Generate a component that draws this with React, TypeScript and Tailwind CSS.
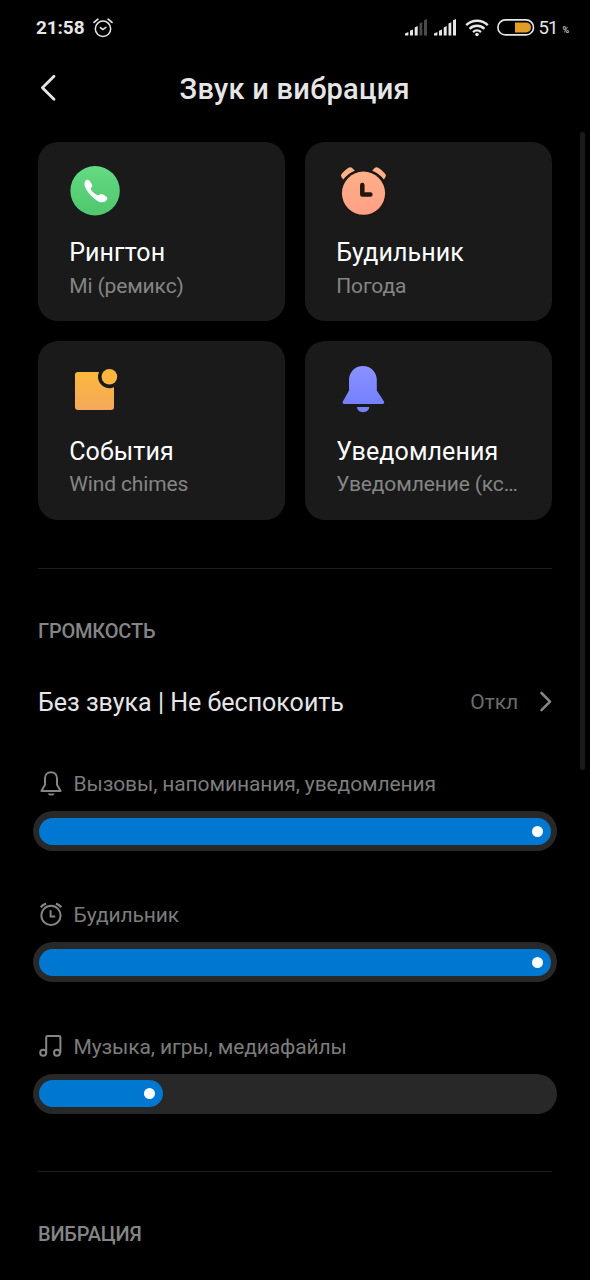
import type { ReactNode } from "react";

type SoundCard = {
  title: string;
  value: string;
  icon: ReactNode;
};

type VolumeItem = {
  label: string;
  icon: ReactNode;
  width: number;
};

function StatusAlarmIcon() {
  return (
    <svg width="20" height="20" viewBox="0 0 20 20" fill="none" stroke="#e6e6e6" strokeLinecap="round">
      <circle cx="10" cy="10.8" r="7.7" strokeWidth="1.5" />
      <path d="M7.4 9.6 9.8 11.6 12.9 9.4" strokeWidth="1.5" strokeLinejoin="round" />
      <path d="M1 4.4 4.9 1.2M19 4.4 15.1 1.2" strokeWidth="1.7" />
    </svg>
  );
}

const SIGNAL_BARS = [
  "M0 16.5V14.5L3.4 13V16.5Z",
  "M5 16.5V11.7L8 10.4V16.5Z",
  "M9.7 16.5V8.4L12.7 7V16.5Z",
  "M14.5 16.5V4.5L17.3 3.3V16.5Z",
  "M19 16.5V1.2L22 0V16.5Z"
];

function SignalIcon({ level }: { level: number }) {
  return (
    <svg width="22" height="17" viewBox="0 0 22 17">
      {SIGNAL_BARS.map((d, i) => (
        <path key={d} d={d} fill={i < level ? "#e6e6e6" : "#4a4a4a"} />
      ))}
    </svg>
  );
}

function WifiIcon() {
  return (
    <svg width="24" height="18" viewBox="0 0 24 18" fill="none" stroke="#e6e6e6" strokeWidth="2.4">
      <path d="M1.2 6.2C7.2 0.2 16.8 0.2 22.8 6.2" />
      <path d="M4.6 9.8C8.8 5.8 15.2 5.8 19.4 9.8" />
      <path d="M8 13.1C10.3 11 13.7 11 16 13.1" />
      <circle cx="12" cy="15.5" r="1.8" fill="#e6e6e6" stroke="none" />
    </svg>
  );
}

function BatteryIcon() {
  return (
    <svg width="38" height="17" viewBox="0 0 38 17">
      <rect x="0.9" y="0.9" width="35.6" height="15" rx="7.5" fill="none" stroke="#e6e6e6" strokeWidth="1.6" />
      <path d="M18 3.4H29A5 5 0 0 1 29 13.4H18Z" fill="#e39d26" />
    </svg>
  );
}

function PhoneIcon() {
  return (
    <svg className="overflow-visible" width="50" height="50" viewBox="0 0 50 50">
      <defs>
        <linearGradient id="phone" x1="0" y1="0" x2="0" y2="1">
          <stop offset="0" stopColor="#63db82" />
          <stop offset="1" stopColor="#50c66d" />
        </linearGradient>
      </defs>
      <circle cx="26.1" cy="24.8" r="24.7" fill="url(#phone)" />
      <path
        d="M16.2 15.2C17 13.8 18.9 13.2 20.2 14.4C21.7 15.8 23.3 18.3 23.3 19.8C23.3 21 21.8 21.6 21.8 22.8C21.9 24.9 27.2 29.4 29 29.3C30.2 29.2 30.8 27.8 32 27.9C33.8 28 36.3 29.4 37.8 31C39 32.4 38 34.2 36.6 35.2C34.6 36.6 32.2 36.8 29.5 35.4C24 32.6 18.4 26.5 16.2 21.3C15.3 19.2 15.2 17 16.2 15.2Z"
        fill="#fff"
      />
    </svg>
  );
}

function AlarmIcon() {
  return (
    <svg width="50" height="50" viewBox="0 0 50 50">
      <defs>
        <linearGradient id="alarm" x1="0" y1="0" x2="0" y2="1">
          <stop offset="0" stopColor="#ffb088" />
          <stop offset="1" stopColor="#ff9f86" />
        </linearGradient>
      </defs>
      <path d="M7.3 13.6 5.4 11Q4.3 9.2 5.9 7.6Q9 4 12.5 1.8Q14.6 0.7 16.4 2.2L18.8 4.8Q12 7.4 7.3 13.6Z" fill="#ffb28a" />
      <path d="M47.9 13.6 49.4 11Q50.5 9.2 48.9 7.6Q46 4 42.3 1.8Q40.2 0.7 38.4 2.2L36.2 4.8Q43.2 7.4 47.9 13.6Z" fill="#ffb28a" />
      <circle cx="27.5" cy="27.2" r="23.1" fill="#1f1512" />
      <circle cx="27.5" cy="27.2" r="21.6" fill="url(#alarm)" />
      <path d="M26.3 19V28.4H34.4" fill="none" stroke="#24150f" strokeWidth="4.5" strokeLinecap="round" strokeLinejoin="round" />
    </svg>
  );
}

function EventIcon() {
  return (
    <svg width="50" height="50" viewBox="0 0 50 50">
      <defs>
        <linearGradient id="event" x1="0" y1="0" x2="0" y2="1">
          <stop offset="0" stopColor="#fbb83d" />
          <stop offset="1" stopColor="#f5a85c" />
        </linearGradient>
      </defs>
      <rect x="6" y="7" width="39" height="38" rx="3" fill="url(#event)" />
      <circle cx="40.4" cy="11.8" r="11.4" fill="#1a1a1a" />
      <circle cx="40.4" cy="11.8" r="7.8" fill="#fbb63f" />
    </svg>
  );
}

function BellIcon() {
  return (
    <svg width="50" height="50" viewBox="0 0 50 50">
      <defs>
        <linearGradient id="bell" x1="0" y1="0" x2="0" y2="1">
          <stop offset="0" stopColor="#8a91ff" />
          <stop offset="1" stopColor="#7480ff" />
        </linearGradient>
      </defs>
      <path d="M26.9 1C19 1 13 7.2 13 15V25.6L7 36.2C6 37.8 6.8 39 8.4 39H46.4C48 39 48.6 37.8 47.8 36.2L40.8 25.6V15C40.8 7.2 34.8 1 26.9 1Z" fill="url(#bell)" />
      <path d="M21 42H33.2C33 45.4 30.4 47.2 27.1 47.2S21.2 45.4 21 42Z" fill="#7480ff" />
    </svg>
  );
}

function BellOutlineIcon() {
  return (
    <svg width="24" height="26" viewBox="0 0 24 26" fill="none" stroke="#858585" strokeWidth="2" strokeLinejoin="round">
      <path d="M12 1.2C8.4 1.2 6 3.8 6 7.2V13.8L2.4 20H21.6L18 13.8V7.2C18 3.8 15.6 1.2 12 1.2Z" />
      <path d="M8.7 22.4H15.6C14.8 24 13.6 24.6 12.2 24.6S9.5 24 8.7 22.4Z" fill="#858585" stroke="none" />
    </svg>
  );
}

function AlarmOutlineIcon() {
  return (
    <svg width="24" height="26" viewBox="0 0 24 26" fill="none" stroke="#858585" strokeWidth="2">
      <circle cx="12" cy="13.4" r="9.6" />
      <path d="M11.6 8.2V14.4H16.2" />
      <path d="M1.8 5.2Q3.6 2.8 7 1.6M22.2 5.2Q20.4 2.8 17 1.6" strokeWidth="2.4" />
    </svg>
  );
}

function MusicIcon() {
  return (
    <svg width="24" height="26" viewBox="0 0 24 26" fill="none" stroke="#858585" strokeWidth="2">
      <path d="M7.2 18.8V3.4Q7.2 2 8.6 2H20Q21.4 2 21.4 3.4V18.8" />
      <circle cx="4.2" cy="18.8" r="3" />
      <circle cx="18" cy="18.8" r="3" />
    </svg>
  );
}

const CARDS: SoundCard[] = [
  { title: "Рингтон", value: "Mi (ремикс)", icon: <PhoneIcon /> },
  { title: "Будильник", value: "Погода", icon: <AlarmIcon /> },
  { title: "События", value: "Wind chimes", icon: <EventIcon /> },
  { title: "Уведомления", value: "Уведомление (кс…", icon: <BellIcon /> }
];

const VOLUMES: VolumeItem[] = [
  { label: "Вызовы, напоминания, уведомления", icon: <BellOutlineIcon />, width: 512.5 },
  { label: "Будильник", icon: <AlarmOutlineIcon />, width: 512.5 },
  { label: "Музыка, игры, медиафайлы", icon: <MusicIcon />, width: 124 }
];

function StatusBar() {
  return (
    <div className="flex h-[55px] items-center pl-9 pr-[21px] text-[#e6e6e6]">
      <span className="text-[19px] font-bold leading-6 tracking-[-0.1px]">21:58</span>
      <span className="ml-[9px]">
        <StatusAlarmIcon />
      </span>
      <div className="ml-auto flex items-center">
        <SignalIcon level={3} />
        <span className="ml-[7px]">
          <SignalIcon level={5} />
        </span>
        <span className="ml-[9px]">
          <WifiIcon />
        </span>
        <span className="ml-2">
          <BatteryIcon />
        </span>
        <span className="ml-[3px] w-[19px] text-[18.5px] leading-6 tracking-[-0.9px]">51</span>
        <span className="ml-[5px] mt-1 text-[9px] leading-3">%</span>
      </div>
    </div>
  );
}

function Card({ title, value, icon }: SoundCard) {
  return (
    <div className="min-w-0 rounded-[20px] bg-[#1a1a1a] pl-[31.2px] pt-6">
      <div className="-ml-[0.2px] h-[50px]">{icon}</div>
      <p className="mt-[22px] whitespace-nowrap text-[25px] leading-[30px] tracking-[0.1px] text-white">{title}</p>
      <p className="mt-[3.5px] whitespace-nowrap text-[21px] leading-7 tracking-[-0.13px] text-[#858585]">{value}</p>
    </div>
  );
}

function Volume({ label, icon, width }: VolumeItem) {
  return (
    <div>
      <div className="flex h-[28px] items-center px-[39px]">
        {icon}
        <span className="ml-[10.5px] text-[21px] leading-7 tracking-[-0.11px] text-[#7c7c7c]">{label}</span>
      </div>
      <div className="mx-[33px] mt-[13px] flex h-10 items-center rounded-full bg-[#282828] px-[6px]">
        <div className="flex h-[27px] items-center justify-end rounded-full bg-[#0077d0] pr-2" style={{ width }}>
          <span className="size-[11px] rounded-full bg-white" />
        </div>
      </div>
    </div>
  );
}

export default function App() {
  return (
    <div className="relative h-[1280px] w-[590px] overflow-hidden bg-black font-[Roboto,sans-serif]">
      <StatusBar />
      <header className="flex h-[67px] items-center">
        <svg className="ml-10 -mt-[2px]" width="16" height="28" viewBox="0 0 16 28" fill="none" stroke="#e6e6e6" strokeWidth="2.8" strokeLinecap="round" strokeLinejoin="round">
          <path d="M14 2.2 2.4 13.7 14 25.2" />
        </svg>
        <h1 className="ml-[123.5px] text-[29px] font-medium leading-9 tracking-[0.28px] text-[#e6e6e6]">Звук и вибрация</h1>
      </header>

      <main>
        <div className="mx-[38px] mt-5 grid grid-cols-2 grid-rows-[179px_179px] gap-x-5 gap-y-[19.5px]">
          {CARDS.map((card) => (
            <Card key={card.title} {...card} />
          ))}
        </div>

        <section className="mx-[38px] mt-12 border-t border-[#1e1e1e] pt-[50px]">
          <h2 className="text-[20px] font-medium leading-6 tracking-[-0.2px] text-[#858585]">ГРОМКОСТЬ</h2>
          <div className="mt-11 flex h-[31px] items-center">
            <span className="text-[25px] leading-[31px] text-[#e6e6e6]">Без звука | Не беспокоить</span>
            <span className="ml-auto text-[21px] leading-7 tracking-[-0.1px] text-[#6c6c6c]">Откл</span>
            <svg className="ml-[21px]" width="13" height="22" viewBox="0 0 13 22" fill="none" stroke="#858585" strokeWidth="2.6" strokeLinecap="round" strokeLinejoin="round">
              <path d="M2.5 2 11 10.6 2.5 19.2" />
            </svg>
          </div>
        </section>

        <div className="mt-[52.6px] flex flex-col gap-[50.3px]">
          {VOLUMES.map((item) => (
            <Volume key={item.label} {...item} />
          ))}
        </div>

        <section className="mx-[38px] mt-[57px] border-t border-[#1e1e1e] pt-[50px]">
          <h2 className="text-[20px] font-medium leading-6 tracking-[-0.2px] text-[#858585]">ВИБРАЦИЯ</h2>
        </section>
      </main>

      <div className="absolute right-[5px] top-[132px] h-[638px] w-[5px] rounded-full bg-[#1a1a1a]" />
    </div>
  );
}
